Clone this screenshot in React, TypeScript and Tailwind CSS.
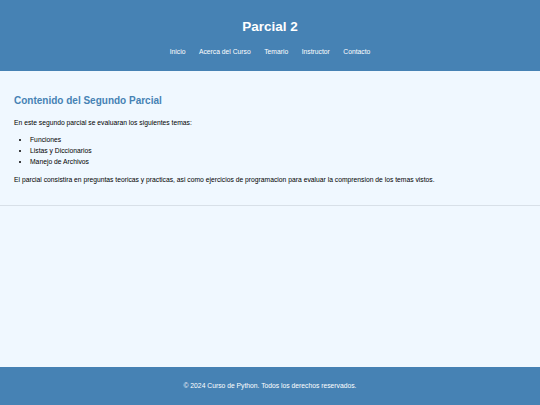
import React from "react";

export default function App() {
  const links = ["Inicio", "Acerca del Curso", "Temario", "Instructor", "Contacto"];
  return (
    <div
      className="min-h-screen flex flex-col bg-[#F0F8FF] text-black"
      style={{ fontFamily: '"Liberation Sans", Arial, sans-serif' }}
    >
      <header className="h-[71px] bg-[#4682B4] flex flex-col items-center pt-[19px]">
        <h1 className="text-[13.5px] leading-[16px] font-bold text-white">Parcial 2</h1>
        <nav className="mt-[13px] flex gap-[13.5px] text-[6.75px] leading-[8px] text-white">
          {links.map((l) => (
            <a key={l} href="#" className="text-white">
              {l}
            </a>
          ))}
        </nav>
      </header>
      <main className="flex-1">
        <section className="px-[14px] pt-[24px] pb-[20px] border-b border-[#d8e0e8]">
          <h2 className="text-[10px] leading-[12px] font-bold text-[#4682B4]">
            Contenido del Segundo Parcial
          </h2>
          <p className="mt-[10px] text-[6.75px] leading-[11px]">
            En este segundo parcial se evaluaran los siguientes temas:
          </p>
          <ul className="mt-[6px] pl-[16px] list-disc text-[6.75px] leading-[11px]">
            <li>Funciones</li>
            <li>Listas y Diccionarios</li>
            <li>Manejo de Archivos</li>
          </ul>
          <p className="mt-[7px] text-[6.75px] leading-[11px]">
            El parcial consistira en preguntas teoricas y practicas, asi como ejercicios de programacion para evaluar la comprension de los temas vistos.
          </p>
        </section>
      </main>
      <footer className="h-[38px] bg-[#4682B4] flex items-center justify-center text-[6.75px] leading-[8px] text-white">
        © 2024 Curso de Python. Todos los derechos reservados.
      </footer>
    </div>
  );
}
